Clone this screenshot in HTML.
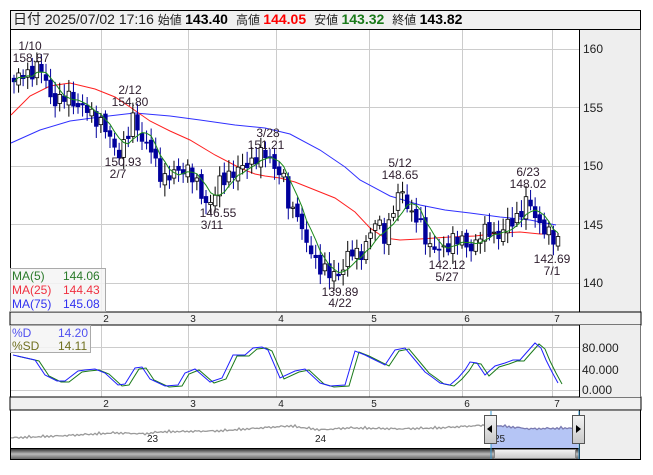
<!DOCTYPE html>
<html><head><meta charset="utf-8"><style>
body{margin:0;background:#fff;width:653px;height:470px;overflow:hidden;font-family:"Liberation Sans","Noto Sans CJK JP",sans-serif}
svg text{font-family:"Liberation Sans","Noto Sans CJK JP",sans-serif}
</style></head><body>
<svg id="s" width="653" height="470" xmlns="http://www.w3.org/2000/svg">
<rect x="10.5" y="10.5" width="630" height="449" fill="#fff" stroke="#000"/>
<rect x="11" y="11" width="629" height="18" fill="#f0f0f0"/>
<line x1="10" y1="29.5" x2="641" y2="29.5" stroke="#000"/>
<text y="24" font-size="14"><tspan x="13" fill="#222">日付 2025/07/02 17:16 </tspan><tspan fill="#222" font-size="12">始値 </tspan><tspan font-weight="bold" font-size="14">143.40</tspan><tspan fill="#222" font-size="12" dx="8">高値 </tspan><tspan font-weight="bold" font-size="14" fill="#f00">144.05</tspan><tspan fill="#222" font-size="12" dx="8">安値 </tspan><tspan font-weight="bold" font-size="14" fill="#1a7a1a">143.32</tspan><tspan fill="#222" font-size="12" dx="8">終値 </tspan><tspan font-weight="bold" font-size="14">143.82</tspan></text>
<rect x="579.5" y="30" width="61" height="282" fill="#eeeeee"/>
<line x1="579.5" y1="30" x2="579.5" y2="312" stroke="#000"/>
<g id="grid" stroke="#cccccc" stroke-width="1"></g>
<g font-size="12" fill="#222"><text x="583" y="53">160</text><text x="583" y="112">155</text><text x="583" y="170">150</text><text x="583" y="229">145</text><text x="583" y="287">140</text></g>
<rect x="10" y="312" width="631" height="13" fill="#f0f0f0" stroke="#000"/>
<rect x="10" y="397" width="631" height="13" fill="#f0f0f0" stroke="#000"/>
<g font-size="10" fill="#222" text-anchor="middle" id="dates"></g>
<rect x="579.5" y="325" width="61" height="72" fill="#eeeeee"/>
<line x1="579.5" y1="325" x2="579.5" y2="397" stroke="#000"/>
<g font-size="12" fill="#222"><text x="582" y="352">80.000</text><text x="582" y="374">40.000</text><text x="582" y="394">0.000</text></g>
<g id="main"></g>
<g id="lab" font-size="12" fill="#302030" text-anchor="middle"></g>
<rect x="10.5" y="268.5" width="95" height="43" fill="#f4f4f4" fill-opacity="0.85" stroke="#aaa"/>
<g font-size="12"><text x="12" y="280" fill="#2a7a2a">MA(5)</text><text x="63" y="280" fill="#2a7a2a">144.06</text><text x="12" y="294" fill="#f03040">MA(25)</text><text x="63" y="294" fill="#f03040">144.43</text><text x="12" y="308" fill="#3030f0">MA(75)</text><text x="63" y="308" fill="#3030f0">145.08</text></g>
<rect x="10.5" y="325.5" width="80" height="27" fill="#f4f4f4" fill-opacity="0.85" stroke="#aaa"/>
<g font-size="12"><text x="12" y="337" fill="#5050f0">%D</text><text x="58" y="337" fill="#5050f0">14.20</text><text x="12" y="350" fill="#707020">%SD</text><text x="58" y="350" fill="#707020">14.11</text></g>
<line x1="10" y1="448.5" x2="579" y2="448.5" stroke="#000"/>
<rect x="580" y="411" width="60" height="48" fill="#eeeeee"/>
<line x1="579.5" y1="410" x2="579.5" y2="460" stroke="#000"/>
<defs><linearGradient id="sb" x1="0" y1="0" x2="0" y2="1"><stop offset="0" stop-color="#333"/><stop offset="0.5" stop-color="#bbb"/><stop offset="1" stop-color="#666"/></linearGradient>
<linearGradient id="th" x1="0" y1="0" x2="0" y2="1"><stop offset="0" stop-color="#f4f4f4"/><stop offset="1" stop-color="#c8c8c8"/></linearGradient></defs>
<rect x="11" y="449" width="568" height="10" fill="url(#sb)"/>
<rect x="494.5" y="449.5" width="81" height="9" fill="url(#th)" stroke="#888"/>
<g id="nav"></g>
<g font-size="10" fill="#222"><text x="147" y="442">23</text><text x="315" y="442">24</text><text x="494" y="442">25</text></g>
<rect x="484.5" y="415.5" width="12" height="28" fill="url(#th)" stroke="#555"/><path d="M487 429 l5 -4 v8z" fill="#000"/>
<rect x="572.5" y="415.5" width="12" height="28" fill="url(#th)" stroke="#555"/><path d="M581 429 l-5 -4 v8z" fill="#000"/>
</svg>
<script>
const NS="http://www.w3.org/2000/svg";
function el(p,t,a){const e=document.createElementNS(NS,t);for(const k in a)e.setAttribute(k,a[k]);p.appendChild(e);return e}
const g=document.getElementById('grid');
const vx=[101,188,276,369,462,552];
[49,107,166,224,283].forEach(y=>el(g,'line',{x1:11,x2:579,y1:y+.5,y2:y+.5}));
[347,369,390].forEach(y=>el(g,'line',{x1:11,x2:579,y1:y+.5,y2:y+.5}));
vx.forEach(x=>{el(g,'line',{x1:x+.5,x2:x+.5,y1:30,y2:312});el(g,'line',{x1:x+.5,x2:x+.5,y1:325,y2:397});});
const d=document.getElementById('dates');
['2','3','4','5','6','7'].forEach((t,i)=>{let a=el(d,'text',{x:vx[i]+5,y:322});a.textContent=t;let b=el(d,'text',{x:vx[i]+5,y:407});b.textContent=t;});
const kp=[[14,157.2],[25,157.8],[38,158.5],[45,157.5],[50,156],[60,155.5],[70,156],[80,155],[90,154.5],[100,154],[108,152.5],[115,151.5],[120,151.3],[128,152.5],[135,154.5],[140,152.5],[150,151.5],[158,149.5],[168,149],[180,149.5],[186,150.2],[195,148.5],[205,147],[212,147],[220,148.5],[230,149.5],[240,149.5],[250,150.5],[258,150.8],[268,150.9],[275,150],[283,149],[290,146],[297,146.5],[304,143.5],[312,142.5],[320,141.5],[330,140.5],[340,141],[350,142.5],[360,142.5],[370,144],[378,145.5],[385,144],[393,146],[402,148.2],[410,146],[420,145],[428,143.5],[438,142.6],[445,142.8],[452,144],[460,143.5],[470,143],[480,144],[490,144.5],[500,144],[510,145.2],[520,146],[528,147],[535,145.8],[545,144.5],[552,143.6],[558,143.8]];
function P(x){for(let i=0;i<kp.length-1;i++){if(x<=kp[i+1][0]){const t=(x-kp[i][0])/(kp[i+1][0]-kp[i][0]);return kp[i][1]+t*(kp[i+1][1]-kp[i][1]);}}return kp[kp.length-1][1];}
const Y=p=>49+(160-p)*11.7;
const m=document.getElementById('main');
function poly(pts,c,w){el(m,'polyline',{points:pts.map(p=>p.join(',')).join(' '),fill:'none',stroke:c,'stroke-width':w||1})}
poly([[11,143],[40,130],[70,121],[100,117],[135,113],[170,116],[200,120],[235,125],[265,128],[290,134],[320,150],[345,167],[360,180],[390,196],[420,205],[445,210],[470,213],[500,217],[530,220],[556,225]],'#3030ff');
poly([[11,115],[30,96],[50,86],[70,83],[95,89],[115,97],[130,107],[150,121],[170,131],[190,140],[215,155],[240,168],[255,174],[265,176],[280,178],[295,182],[315,190],[335,198],[355,212],[370,228],[385,238],[400,240],[420,239],[450,237],[475,236],[500,233],[520,232],[540,234],[556,234]],'#ff2020');
const n=120,cl=[],xs=[];
for(let i=0;i<n;i++){const x=14+i*(558-14)/(n-1);xs.push(x);const c=P(x)+Math.sin(i*2.7)*0.5+Math.sin(i*1.3)*0.3;cl.push(c);}
const ma5=[];
for(let i=0;i<n;i++){const x=xs[i],c=cl[i],o=i?cl[i-1]+Math.sin(i*5.1)*0.3:c+0.3;const h=Math.max(o,c)+0.3+Math.abs(Math.sin(i*3.3))*0.7,l=Math.min(o,c)-0.3-Math.abs(Math.cos(i*2.1))*0.7;
el(m,'line',{x1:x,x2:x,y1:Y(h),y2:Y(l),stroke:c<o?'#00009c':'#000'});
const yt=Y(Math.max(o,c)),yb=Y(Math.min(o,c));
el(m,'rect',{x:x-1.8,y:yt,width:3.6,height:Math.max(1,yb-yt),fill:c<o?'#00009c':'#fff',stroke:c<o?'#00009c':'#000','stroke-width':0.8});
let s=0,k=0;for(let j=Math.max(0,i-4);j<=i;j++){s+=cl[j];k++}ma5.push([x.toFixed(1),Y(s/k).toFixed(1)]);}
poly(ma5,'#1a8a1a');
const D=[[13,355],[35,360],[45,375],[57,381],[65,381],[78,371],[85,370],[95,369],[105,373],[118,385],[125,384],[135,368],[142,367],[150,379],[165,386],[178,385],[185,373],[195,369],[210,382],[222,378],[233,355],[245,355],[253,348],[262,347],[268,350],[280,378],[295,371],[305,369],[320,383],[330,386],[345,385],[355,351],[365,355],[375,360],[385,365],[395,350],[405,348],[415,360],[425,372],[432,377],[440,383],[450,385],[458,378],[465,370],[470,362],[477,363],[485,375],[495,366],[505,363],[513,360],[520,360],[527,352],[535,343],[541,348],[546,360],[552,372],[558,383]];
poly(D.map(p=>[p[0]+4,p[1]+1]),'#1a7a1a');
poly(D,'#2020ff');
const L=document.getElementById('lab');
[[30,50,'1/10'],[31,62,'158.87'],[130,94,'2/12'],[130,106,'154.80'],[123,166,'150.93'],[118,178,'2/7'],[268,137,'3/28'],[266,149,'151.21'],[218,217,'146.55'],[212,229,'3/11'],[400,167,'5/12'],[400,179,'148.65'],[528,176,'6/23'],[528,188,'148.02'],[340,296,'139.89'],[340,307,'4/22'],[447,269,'142.12'],[447,281,'5/27'],[552,263,'142.69'],[552,275,'7/1']].forEach(a=>{const t=el(L,'text',{x:a[0],y:a[1]});t.textContent=a[2]});
const nv=document.getElementById('nav');
const nk=[[11,438],[60,436],[115,433],[145,434],[160,432],[220,431],[290,426],[320,430],[350,428],[400,429],[440,428],[490,425],[500,426],[530,429],[578,428]];
function NY(x){for(let i=0;i<nk.length-1;i++){if(x<=nk[i+1][0]){const t=(x-nk[i][0])/(nk[i+1][0]-nk[i][0]);return nk[i][1]+t*(nk[i+1][1]-nk[i][1]);}}return 428}
let pts=[];
for(let x=11;x<=578;x+=2){const y=NY(x)+Math.sin(x*1.7)*0.8+((x%14<3)?-1:0);pts.push([x,y.toFixed(1)]);}
const sel=pts.filter(p=>p[0]>=491);
el(nv,'path',{d:'M491 448 L'+sel.map(p=>p.join(' ')).join(' L')+' L578 448Z',fill:'#b5c5f5'});
el(nv,'polyline',{points:pts.filter(p=>p[0]<=491).map(p=>p.join(',')).join(' '),fill:'none',stroke:'#999','stroke-width':1.3});
el(nv,'polyline',{points:sel.map(p=>p.join(',')).join(' '),fill:'none',stroke:'#7a7ab0','stroke-width':1.3});
el(nv,'line',{x1:491,x2:491,y1:411,y2:459,stroke:'#3a9ad0'});el(nv,'line',{x1:579,x2:579,y1:411,y2:459,stroke:'#3a9ad0'});
</script>
</body></html>
